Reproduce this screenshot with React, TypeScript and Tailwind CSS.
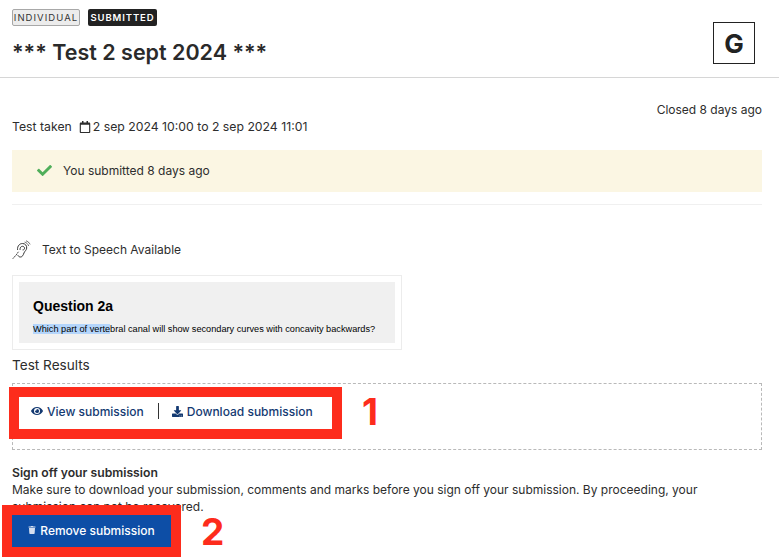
import { FaCheck, FaDownload, FaEye, FaRegCalendar, FaTrash } from 'react-icons/fa';

function EarIcon() {
  return (
    <svg width="20" height="20" viewBox="0 0 20 20" fill="none" stroke="#333" strokeLinecap="round" className="shrink-0">
      <path d="M5.5 9.5c-.3-3.6 2.2-6 5-6s4.4 2.2 4.2 4.6c-.2 2.2-2 3-2.7 4.8-.7 2-1.5 4.1-3.6 4.1-1.2 0-2-.6-2.4-1.5" strokeWidth="1" />
      <path d="M8 9.5c-.1-1.9 1-3.2 2.5-3.2s2.2 1.2 2 2.4c-.1.8-.8 1.2-1.5 1.2" strokeWidth="1" />
      <path d="M13 2.2c1.7.6 3 2 3.6 3.6M14.5 1c1.5.6 2.6 1.6 3.4 3" strokeWidth="0.8" strokeDasharray="1 1" />
      <path d="M1 18.5l4-4.5M5.5 13l1.5-1.8" strokeWidth="0.9" strokeDasharray="1.2 1.2" />
    </svg>
  );
}

function App() {
  return (
    <main className="relative h-[559px] w-[779px] overflow-hidden bg-white font-['Inter',sans-serif] text-[12px] leading-[17px] text-[#2d2d2d]">
      <header className="flex h-[78px] justify-between border-b border-[#d6d6d6] pl-3 pr-6 pt-[9px]">
        <div>
          <div className="flex gap-2">
            <span className="flex h-[17px] w-[68px] items-center justify-center rounded-[2px] border border-[#a8a8a8] bg-[#ececec] text-[9.5px] font-normal tracking-[1.05px] text-[#333]">
              INDIVIDUAL
            </span>
            <span className="flex h-[17px] w-[69px] items-center justify-center rounded-[2px] bg-[#222] text-[9.5px] font-semibold tracking-[0.9px] text-white">
              SUBMITTED
            </span>
          </div>
          <h1 className="mt-[12px] text-[21.5px] font-semibold leading-[28px] text-[#2a2a2a]">*** Test 2 sept 2024 ***</h1>
        </div>
        <div className="mt-[13px] flex h-[42px] w-[42px] items-center justify-center border border-[#222] text-[26px] font-bold text-[#222]">
          G
        </div>
      </header>

      <section className="pl-3 pr-[17px] pt-[23px]">
        <p className="text-right">Closed 8 days ago</p>
        <div className="flex items-center text-[12.25px]">
          <span>Test taken</span>
          <FaRegCalendar className="ml-[7px] mr-[2px] text-[12px]" />
          <span>2 sep 2024 10:00 to 2 sep 2024 11:01</span>
        </div>

        <div className="mt-[15px] flex h-[42px] items-center bg-[#fbf6e3] pb-[2px] pl-[25px]">
          <FaCheck className="text-[15px] text-[#4fae5a]" />
          <span className="ml-[11px]">You submitted 8 days ago</span>
        </div>
        <div className="mt-3 h-px bg-[#f0f0f0]" />

        <div className="mt-[36px] flex h-[17px] items-center">
          <EarIcon />
          <span className="ml-[10px]">Text to Speech Available</span>
        </div>

        <div className="mt-[17px] h-[75px] w-[390px] border border-[#ececec] p-[6px]">
          <div className="h-[61px] bg-[#f0f0f0] pl-[14px] pt-[15px] font-['Liberation_Sans',sans-serif] text-black">
            <div className="text-[14px] font-bold leading-[18px]">Question 2a</div>
            <div className="mt-[7px] whitespace-nowrap text-[9.2px] leading-[14px]">
              <span className="bg-[#b4d5fb]">Which part of verte</span>bral canal will show secondary curves with concavity backwards?
            </div>
          </div>
        </div>

        <h2 className="mt-[5px] text-[13.6px] leading-[20px]">Test Results</h2>

        <div className="mt-[8px] h-[67px] border border-dashed border-[#b9b9b9] pl-[6px] pt-[13px]">
          <div className="flex h-[32px] w-[313px] items-center bg-white pb-1 pl-3 font-medium text-[#143a72] outline-[10px] outline-[#fd2c1c]">
            <FaEye className="text-[12px]" />
            <span className="ml-[4px]">View submission</span>
            <span className="ml-[14px] h-4 w-px bg-[#333]" />
            <FaDownload className="ml-[13px] text-[11px]" />
            <span className="ml-[4px]">Download submission</span>
          </div>
        </div>

        <h3 className="mt-[14px] text-[12.2px] font-semibold">Sign off your submission</h3>
        <p className="w-[740px]">
          Make sure to download your submission, comments and marks before you sign off your submission. By proceeding, your submission can not be recovered.
        </p>
        <button className="absolute left-3 top-[515px] flex h-[32px] w-[159px] items-center justify-center bg-[#0d4ea6] pb-[2px] font-medium text-white outline-[10px] outline-[#fd2c1c]">
          <FaTrash className="mr-[4px] text-[8px] text-[#d5dff0]" />
          Remove submission
        </button>
      </section>

      <span className="absolute left-[362px] top-[389px] text-[37px] font-bold leading-[46px] text-[#fd2c1c]">1</span>
      <span className="absolute left-[201px] top-[509px] text-[37px] font-bold leading-[46px] text-[#fd2c1c]">2</span>
    </main>
  );
}

export default App;
